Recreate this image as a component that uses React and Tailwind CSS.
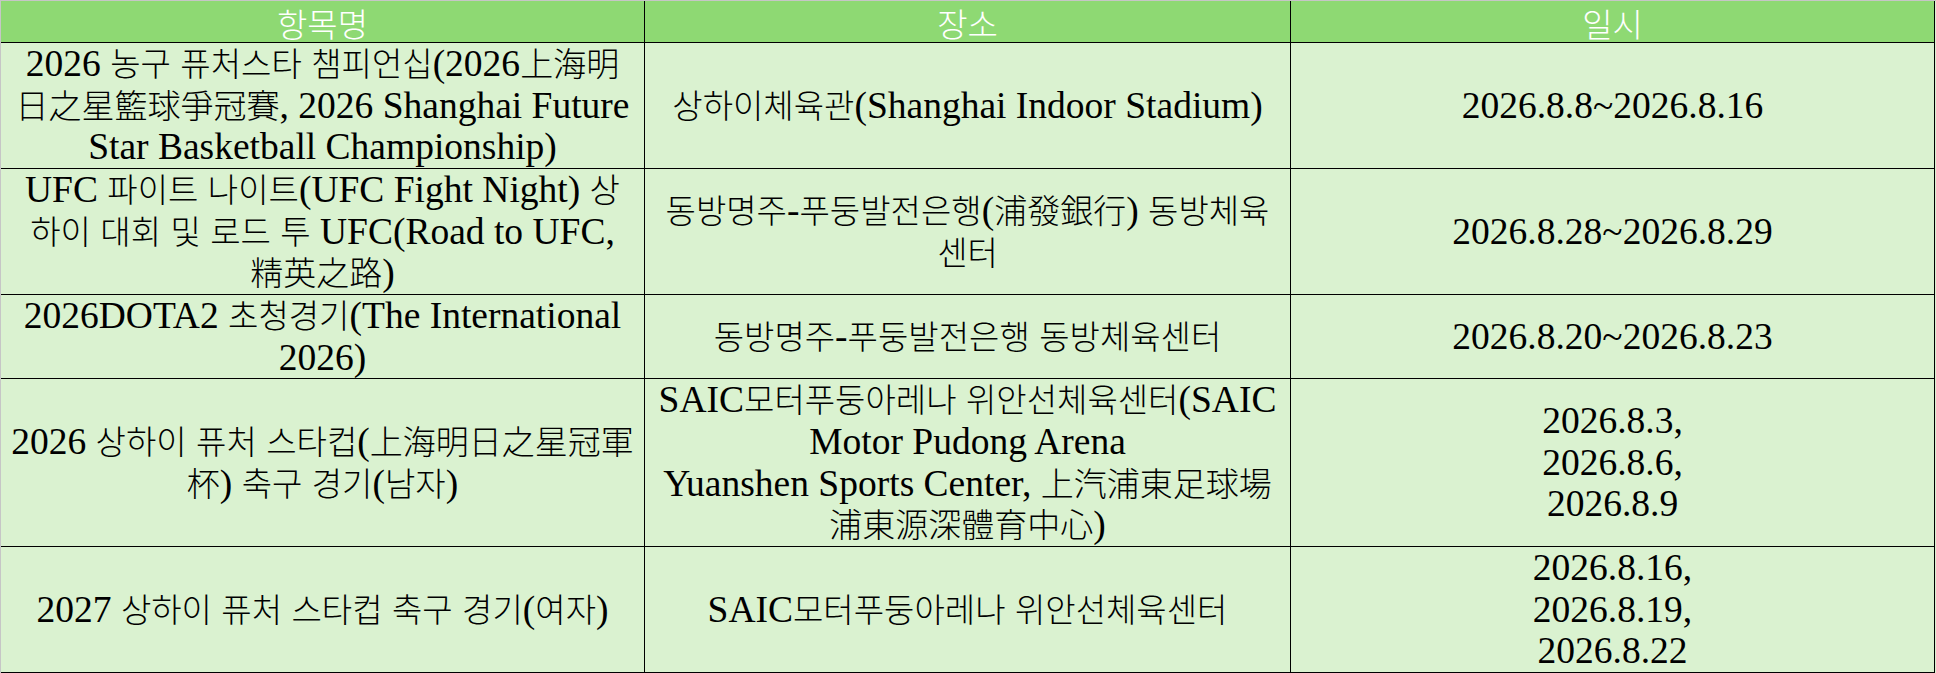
import React from "react";

// hangul / hanja runs get a smaller size so they take the same width as in the sheet
const CJK = /([\u1100-\u11ff\u3000-\u303f\u3130-\u318f\u3400-\u4dbf\u4e00-\u9fff\uac00-\ud7af\uf900-\ufaff]+)/;

const Line = ({ text }) => (
  <div className="whitespace-nowrap">
    {text.split(CJK).map((part, i) =>
      i % 2 === 1 ? (
        <span
          key={i}
          className="font-['Noto_Sans_CJK_KR','Noto_Sans_CJK_TC',sans-serif] text-[33px] leading-none font-light"
        >
          {part}
        </span>
      ) : (
        <span key={i}>{part}</span>
      )
    )}
  </div>
);

const Cell = ({ lines }) => (
  <div className="flex flex-col items-center justify-center border-r border-b border-black text-center">
    {lines.map((line, i) => (
      <Line key={i} text={line} />
    ))}
  </div>
);

const rows = [
  {
    name: [
      "2026 농구 퓨처스타 챔피언십(2026上海明",
      "日之星籃球爭冠賽, 2026 Shanghai Future",
      "Star Basketball Championship)",
    ],
    place: ["상하이체육관(Shanghai Indoor Stadium)"],
    date: ["2026.8.8~2026.8.16"],
  },
  {
    name: [
      "UFC 파이트 나이트(UFC Fight Night) 상",
      "하이 대회 및 로드 투 UFC(Road to UFC,",
      "精英之路)",
    ],
    place: ["동방명주-푸둥발전은행(浦發銀行) 동방체육", "센터"],
    date: ["2026.8.28~2026.8.29"],
  },
  {
    name: ["2026DOTA2 초청경기(The International", "2026)"],
    place: ["동방명주-푸둥발전은행 동방체육센터"],
    date: ["2026.8.20~2026.8.23"],
  },
  {
    name: ["2026 상하이 퓨처 스타컵(上海明日之星冠軍", "杯) 축구 경기(남자)"],
    place: [
      "SAIC모터푸둥아레나 위안선체육센터(SAIC",
      "Motor Pudong Arena",
      "Yuanshen Sports Center, 上汽浦東足球場",
      "浦東源深體育中心)",
    ],
    date: ["2026.8.3,", "2026.8.6,", "2026.8.9"],
  },
  {
    name: ["2027 상하이 퓨처 스타컵 축구 경기(여자)"],
    place: ["SAIC모터푸둥아레나 위안선체육센터"],
    date: ["2026.8.16,", "2026.8.19,", "2026.8.22"],
  },
];

const headers = ["항목명", "장소", "일시"];

const App = () => {
  return (
    <div className="h-[673px] w-[1936px] overflow-hidden border-t border-l border-[#c6c6c6] bg-white">
      <div className="grid grid-cols-[644px_646px_644px] grid-rows-[42px_126px_126px_84px_168px_126px] bg-[#daf2d0] font-['Liberation_Serif','Noto_Sans_CJK_KR',serif] text-[37.5px] leading-[41.7px] text-black">
        {headers.map((h) => (
          <div
            key={h}
            className="flex items-center justify-center border-r border-b border-black bg-[#8ed973] pt-[3px] font-['Noto_Sans_CJK_KR',sans-serif] text-[33px] leading-none font-light text-white"
          >
            {h}
          </div>
        ))}
        {rows.map((row, i) => (
          <React.Fragment key={i}>
            <Cell lines={row.name} />
            <Cell lines={row.place} />
            <Cell lines={row.date} />
          </React.Fragment>
        ))}
      </div>
    </div>
  );
};

export default App;
